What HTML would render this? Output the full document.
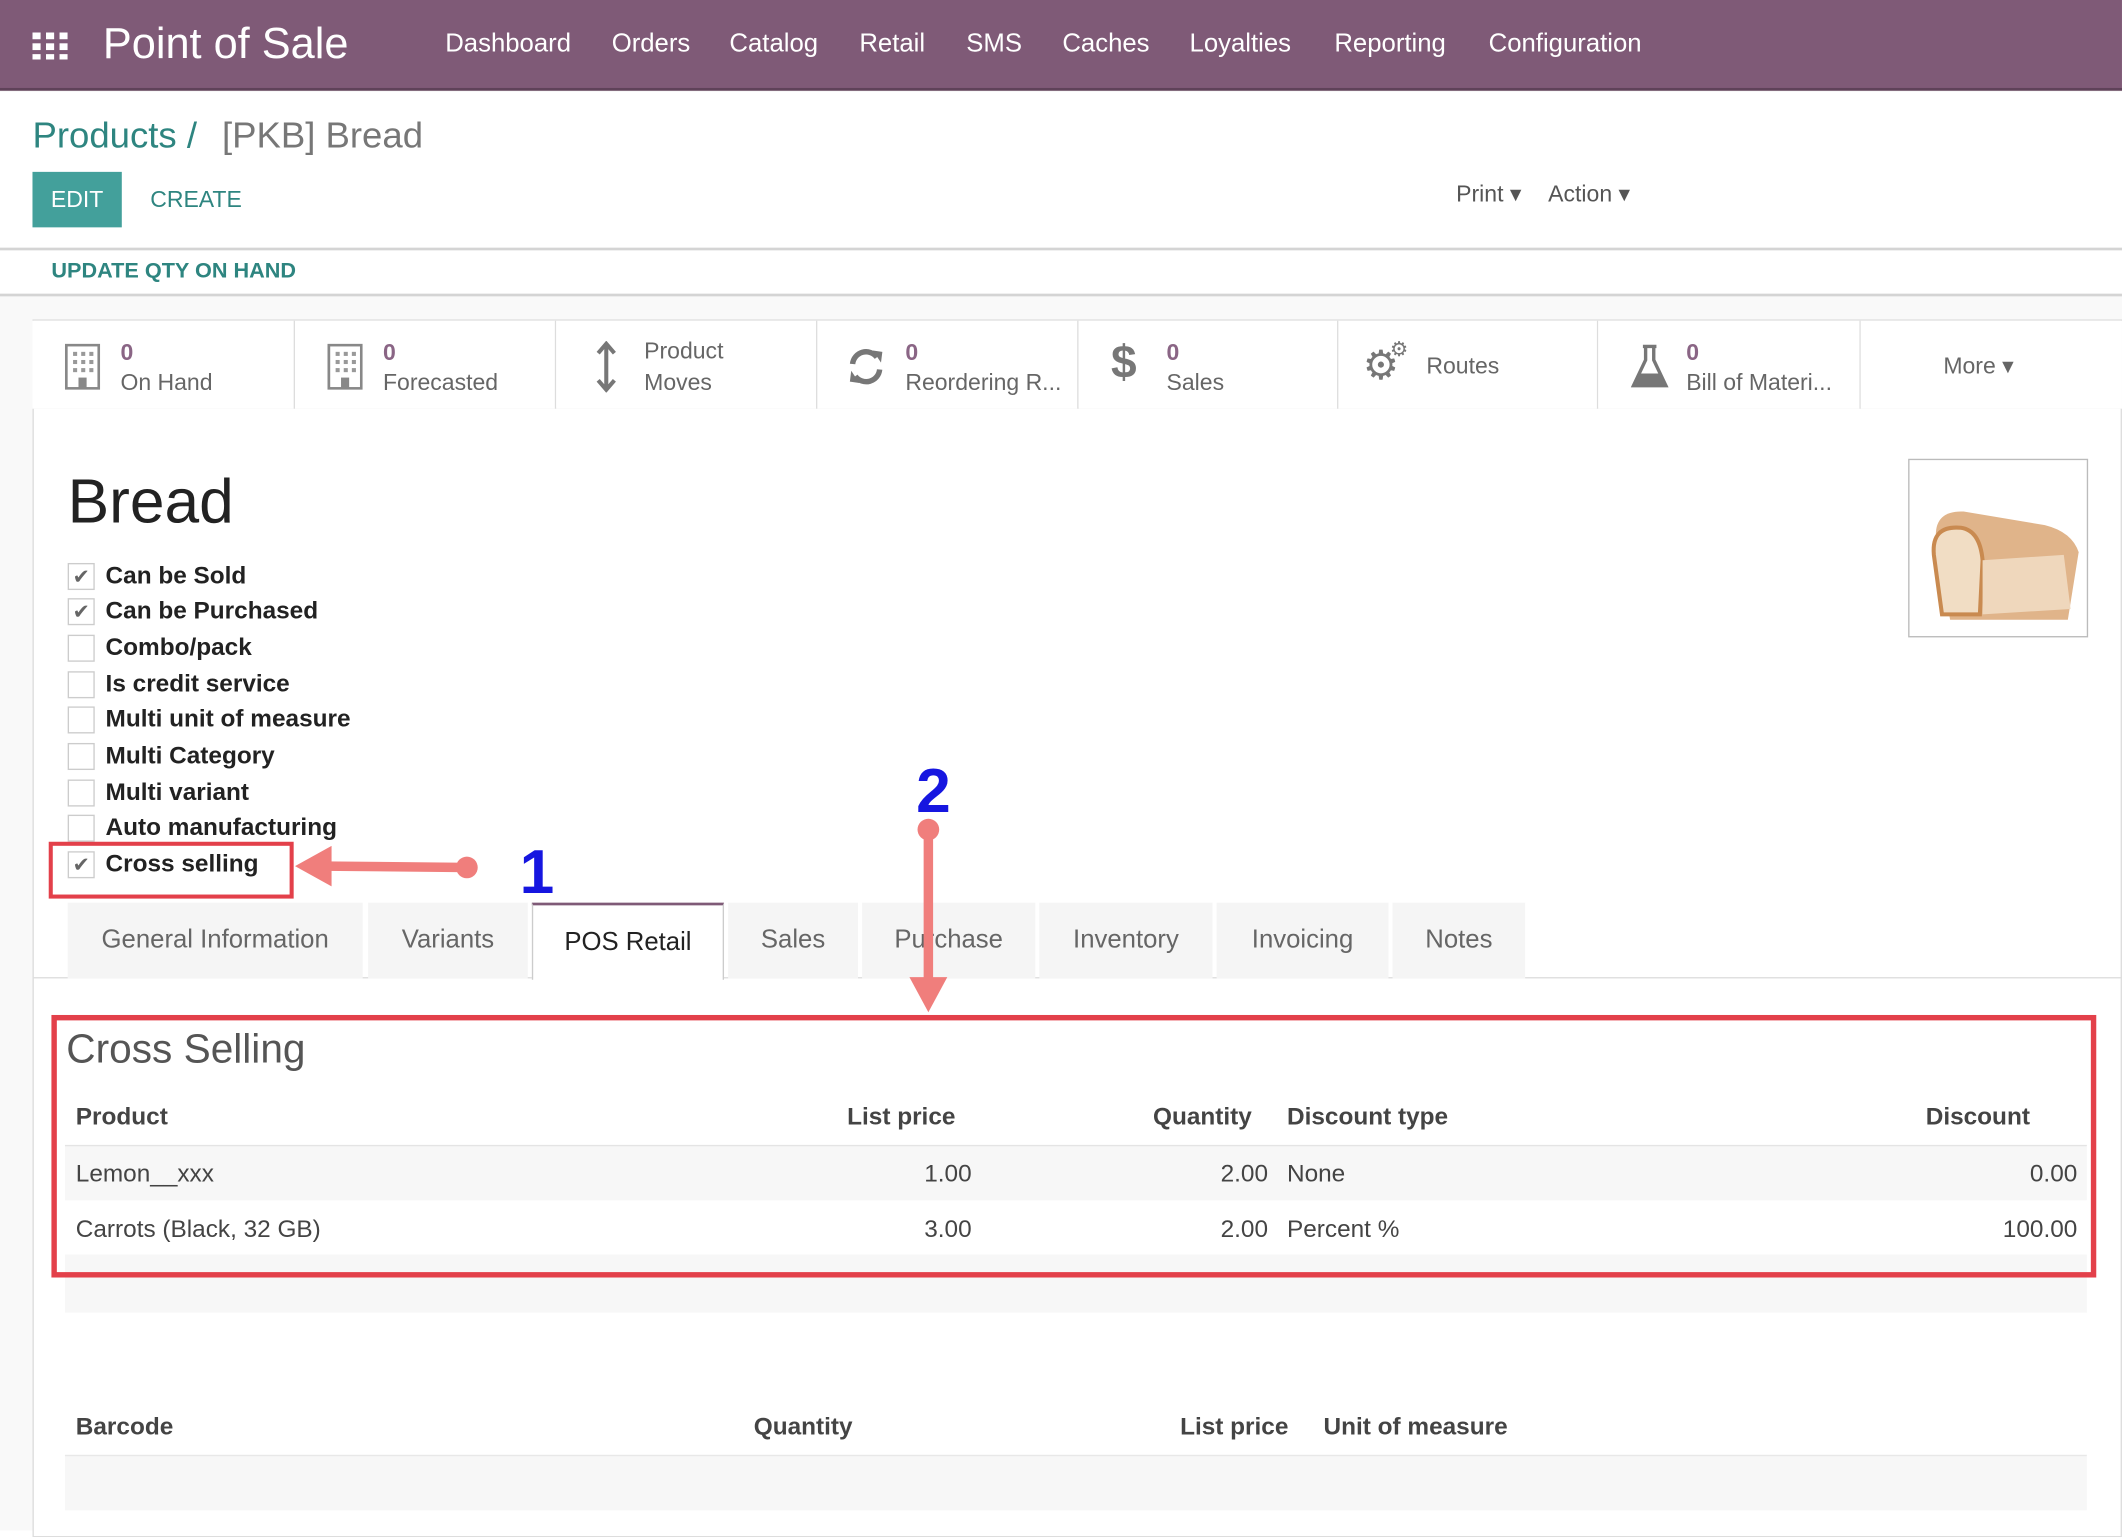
<!DOCTYPE html>
<html><head><meta charset="utf-8"><style>
*{margin:0;padding:0;box-sizing:border-box}
html,body{width:2122px;height:1530px;overflow:hidden;background:#fff}
#c{position:absolute;left:0;top:0;width:1568px;height:1131px;transform:scale(1.3533);transform-origin:0 0;font-family:"Liberation Sans",sans-serif;background:#f9f9f9}
.a{position:absolute;white-space:nowrap}
.nav{position:absolute;left:0;top:0;width:1568px;height:67px;background:#7f5a77;border-bottom:2px solid #5f4259}
.nav .m{position:absolute;top:22px;color:#fff;font-size:19px}
.tl{color:#2e8580}
.bb{position:absolute;top:237px;height:65px;border-right:1px solid #ddd;background:#fff}
.bb .n{position:absolute;left:65px;top:14px;color:#8a6585;font-size:17px;font-weight:bold}
.bb .l{position:absolute;left:65px;top:36px;color:#666;font-size:17px}
.cb{position:absolute;left:50px;width:20px;height:20px;border:1px solid #ccc;background:#fff;font-size:15px;color:#666;text-align:center;line-height:19px}
.lbl{position:absolute;left:78px;font-size:18px;font-weight:bold;color:#222}
.tab{position:absolute;top:667px;height:56px;background:#f5f5f5;color:#666;font-size:19px;text-align:center;line-height:56px}
.h{position:absolute;font-size:18px;font-weight:bold;color:#444}
.v{position:absolute;font-size:18px;color:#444}
</style></head><body><div id="c">
<div class="nav">
 <svg class="a" style="left:24px;top:24px" width="26" height="20"><g fill="#fff">
 <rect x="0" y="0" width="6" height="5"/><rect x="10" y="0" width="6" height="5"/><rect x="20" y="0" width="6" height="5"/>
 <rect x="0" y="8" width="6" height="5"/><rect x="10" y="8" width="6" height="5"/><rect x="20" y="8" width="6" height="5"/>
 <rect x="0" y="16" width="6" height="4"/><rect x="10" y="16" width="6" height="4"/><rect x="20" y="16" width="6" height="4"/></g></svg>
 <div class="a" style="left:76px;top:14px;color:#fff;font-size:32px">Point of Sale</div>
 <div class="m" style="left:329px">Dashboard</div><div class="m" style="left:452px">Orders</div><div class="m" style="left:539px">Catalog</div><div class="m" style="left:635px">Retail</div><div class="m" style="left:714px">SMS</div><div class="m" style="left:785px">Caches</div><div class="m" style="left:879px">Loyalties</div><div class="m" style="left:986px">Reporting</div><div class="m" style="left:1100px">Configuration</div>
</div>
<div class="a" style="left:0;top:68px;width:1568px;height:150px;background:#fff"></div>
<div class="a tl" style="left:24px;top:85px;font-size:27px">Products /</div>
<div class="a" style="left:164px;top:85px;font-size:27px;color:#777">[PKB] Bread</div>
<div class="a" style="left:24px;top:127px;width:66px;height:41px;background:#43a09b;color:#fff;font-size:17px;text-align:center;line-height:41px">EDIT</div>
<div class="a tl" style="left:111px;top:138px;font-size:17px">CREATE</div>
<div class="a" style="left:1076px;top:134px;font-size:17px;color:#555">Print ▾</div>
<div class="a" style="left:1144px;top:134px;font-size:17px;color:#555">Action ▾</div>
<div class="a" style="left:0;top:183px;width:1568px;height:2px;background:#d4d4d4"></div>
<div class="a tl" style="left:38px;top:192px;font-size:16px;font-weight:bold">UPDATE QTY ON HAND</div>
<div class="a" style="left:0;top:217px;width:1568px;height:2px;background:#d4d4d4"></div>
<!-- sheet -->
<div class="a" style="left:24px;top:236px;width:1544px;height:900px;background:#fff;border:1px solid #ddd"></div>
<div class="a" style="left:24px;top:301px;width:1544px;height:1px;background:#ddd"></div>
<div class="bb" style="left:24px;width:194px"><svg class="a" style="left:24px;top:17px" width="26" height="34"><rect x="1" y="1" width="24" height="32" fill="#fff" stroke="#888" stroke-width="2"/><g fill="#999"><rect x="6" y="6" width="3" height="3"/><rect x="12" y="6" width="3" height="3"/><rect x="18" y="6" width="3" height="3"/><rect x="6" y="12" width="3" height="3"/><rect x="12" y="12" width="3" height="3"/><rect x="18" y="12" width="3" height="3"/><rect x="6" y="18" width="3" height="3"/><rect x="12" y="18" width="3" height="3"/><rect x="18" y="18" width="3" height="3"/></g><rect x="10" y="25" width="6" height="8" fill="#888"/></svg><div class="n">0</div><div class="l">On Hand</div></div>
<div class="bb" style="left:218px;width:193px"><svg class="a" style="left:24px;top:17px" width="26" height="34"><rect x="1" y="1" width="24" height="32" fill="#fff" stroke="#888" stroke-width="2"/><g fill="#999"><rect x="6" y="6" width="3" height="3"/><rect x="12" y="6" width="3" height="3"/><rect x="18" y="6" width="3" height="3"/><rect x="6" y="12" width="3" height="3"/><rect x="12" y="12" width="3" height="3"/><rect x="18" y="12" width="3" height="3"/><rect x="6" y="18" width="3" height="3"/><rect x="12" y="18" width="3" height="3"/><rect x="18" y="18" width="3" height="3"/></g><rect x="10" y="25" width="6" height="8" fill="#888"/></svg><div class="n">0</div><div class="l">Forecasted</div></div>
<div class="bb" style="left:411px;width:193px"><svg class="a" style="left:28px;top:15px" width="18" height="38"><path d="M9 2v34M3 9l6-7 6 7M3 29l6 7 6-7" stroke="#777" stroke-width="3" fill="none"/></svg><div class="l" style="top:13px">Product</div><div class="l">Moves</div></div>
<div class="bb" style="left:604px;width:193px"><svg class="a" style="left:21px;top:19px" width="30" height="30"><path d="M5 13A10 10 0 0 1 23 8M25 17A10 10 0 0 1 7 22" stroke="#777" stroke-width="4" fill="none"/><path d="M20 3l7 1-1 8zM10 27l-7-1 1-8z" fill="#777"/></svg><div class="n">0</div><div class="l">Reordering R...</div></div>
<div class="bb" style="left:797px;width:192px"><div class="a" style="left:24px;top:12px;font-size:34px;color:#777;font-weight:bold">$</div><div class="n">0</div><div class="l">Sales</div></div>
<div class="bb" style="left:989px;width:192px"><div class="a" style="left:18px;top:16px;font-size:30px;color:#777">⚙</div><div class="a" style="left:38px;top:12px;font-size:15px;color:#777">⚙</div><div class="l" style="top:24px">Routes</div></div>
<div class="bb" style="left:1181px;width:194px"><svg class="a" style="left:24px;top:17px" width="28" height="34"><path d="M9 2h10M11 2v10L2 31h24L17 12V2" stroke="#777" stroke-width="2.5" fill="none"/><path d="M6 22h16l4 9H2z" fill="#777"/></svg><div class="n">0</div><div class="l">Bill of Materi...</div></div>
<div class="bb" style="left:1375px;width:193px;border-right:none"><div class="l" style="left:61px;top:24px">More ▾</div></div>
<div class="a" style="left:50px;top:343px;font-size:46px;color:#222">Bread</div>
<div class="a" style="left:1410px;top:339px;width:133px;height:132px;border:1px solid #bbb;background:#fff">
<svg width="131" height="130"><g transform="translate(10,22)"><path d="M10 40q-4-25 20-24l60 10q20 5 25 20l-8 50H20z" fill="#e0b48a"/><path d="M8 48q-2-22 20-20 14 2 16 24l-2 40H14z" fill="#f1ddc4" stroke="#c98a50" stroke-width="3"/><path d="M44 52l60-4 5 40-65 4z" fill="#efd7bc"/></g></svg></div>
<div class="cb" style="top:416px">✔</div><div class="lbl" style="top:415px">Can be Sold</div>
<div class="cb" style="top:442px">✔</div><div class="lbl" style="top:441px">Can be Purchased</div>
<div class="cb" style="top:469px"></div><div class="lbl" style="top:468px">Combo/pack</div>
<div class="cb" style="top:496px"></div><div class="lbl" style="top:495px">Is credit service</div>
<div class="cb" style="top:522px"></div><div class="lbl" style="top:521px">Multi unit of measure</div>
<div class="cb" style="top:549px"></div><div class="lbl" style="top:548px">Multi Category</div>
<div class="cb" style="top:576px"></div><div class="lbl" style="top:575px">Multi variant</div>
<div class="cb" style="top:602px"></div><div class="lbl" style="top:601px">Auto manufacturing</div>
<div class="cb" style="top:629px">✔</div><div class="lbl" style="top:628px">Cross selling</div>
<div class="a" style="left:36px;top:622px;width:181px;height:42px;border:3px solid #e3404a"></div>
<!-- tabs -->
<div class="a" style="left:24px;top:722px;width:1544px;height:1px;background:#ddd"></div>
<div class="tab" style="left:50px;width:218px">General Information</div>
<div class="tab" style="left:272px;width:118px">Variants</div>
<div class="tab" style="left:393px;width:142px;background:#fff;color:#222;border:1px solid #ccc;border-top:2px solid #7f5a77;border-bottom:none;height:57px">POS Retail</div>
<div class="tab" style="left:538px;width:96px">Sales</div>
<div class="tab" style="left:637px;width:128px">Purchase</div>
<div class="tab" style="left:768px;width:128px">Inventory</div>
<div class="tab" style="left:899px;width:127px">Invoicing</div>
<div class="tab" style="left:1029px;width:98px">Notes</div>
<!-- cross selling -->
<div class="a" style="left:49px;top:759px;font-size:30px;color:#555">Cross Selling</div>
<div class="h" style="left:56px;top:815px">Product</div>
<div class="h" style="left:606px;width:100px;top:815px;text-align:right">List price</div>
<div class="h" style="left:825px;width:100px;top:815px;text-align:right">Quantity</div>
<div class="h" style="left:951px;top:815px">Discount type</div>
<div class="h" style="left:1400px;width:100px;top:815px;text-align:right">Discount</div>
<div class="a" style="left:48px;top:846px;width:1494px;height:41px;background:#f7f7f7;border-top:1px solid #e4e4e4"></div>
<div class="a" style="left:48px;top:927px;width:1494px;height:43px;background:#f7f7f7"></div>
<div class="v" style="left:56px;top:857px">Lemon__xxx</div>
<div class="v" style="left:618px;width:100px;top:857px;text-align:right">1.00</div>
<div class="v" style="left:837px;width:100px;top:857px;text-align:right">2.00</div>
<div class="v" style="left:951px;top:857px">None</div>
<div class="v" style="left:1435px;width:100px;top:857px;text-align:right">0.00</div>
<div class="v" style="left:56px;top:898px">Carrots (Black, 32 GB)</div>
<div class="v" style="left:618px;width:100px;top:898px;text-align:right">3.00</div>
<div class="v" style="left:837px;width:100px;top:898px;text-align:right">2.00</div>
<div class="v" style="left:951px;top:898px">Percent %</div>
<div class="v" style="left:1435px;width:100px;top:898px;text-align:right">100.00</div>
<div class="a" style="left:38px;top:750px;width:1511px;height:194px;border:4px solid #e3404a"></div>
<div class="h" style="left:56px;top:1044px">Barcode</div>
<div class="h" style="left:557px;top:1044px">Quantity</div>
<div class="h" style="left:872px;top:1044px">List price</div>
<div class="h" style="left:978px;top:1044px">Unit of measure</div>
<div class="a" style="left:48px;top:1075px;width:1494px;height:41px;background:#f7f7f7;border-top:1px solid #e8e8e8"></div>
<!-- annotations -->
<svg class="a" style="left:0;top:0" width="1568" height="1131">
<line x1="345" y1="641" x2="240" y2="640" stroke="#f07e7c" stroke-width="7"/>
<circle cx="345" cy="641" r="8" fill="#f07e7c"/>
<path d="M218 640l27-15v30z" fill="#f07e7c"/>
<line x1="686" y1="613" x2="686" y2="725" stroke="#f07e7c" stroke-width="7"/>
<circle cx="686" cy="613" r="8" fill="#f07e7c"/>
<path d="M686 748l-14-26h28z" fill="#f07e7c"/>
<text x="384" y="660" font-family="Liberation Sans" font-weight="bold" font-size="46" fill="#1616e0">1</text>
<text x="677" y="600" font-family="Liberation Sans" font-weight="bold" font-size="46" fill="#1616e0">2</text>
</svg>
</div></body></html>
